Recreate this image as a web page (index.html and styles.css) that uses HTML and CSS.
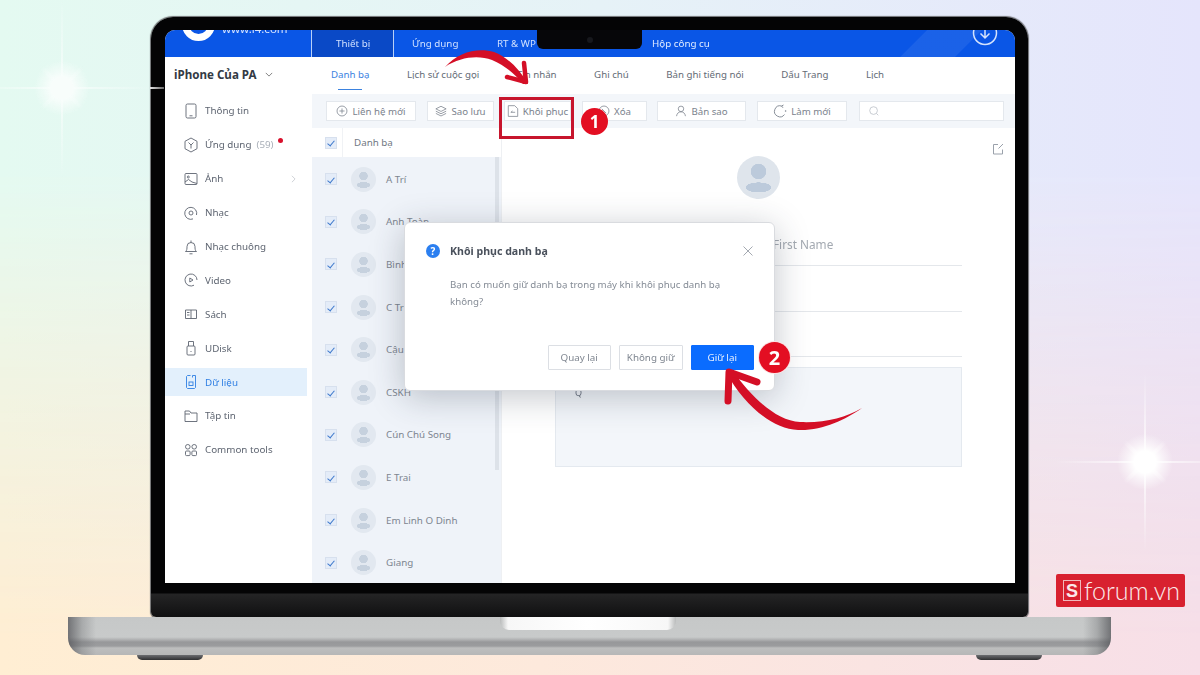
FILE: index.html
```html
<!DOCTYPE html>
<html lang="vi">
<head>
<meta charset="utf-8">
<title>Khôi phục danh bạ</title>
<link rel="stylesheet" href="styles.css">
</head>
<body>
<div class="stage">
  <div class="star star-a"></div>
  <div class="star star-b"></div>

  <div class="laptop">
    <div class="bezel">
      <div class="notch"><span class="camera"></span></div>
      <div class="glint"></div>
      <div class="screen">
        <header class="topbar">
          <div class="brand">
            <span class="brand-mark"></span>
            <span class="brand-url">www.i4.com</span>
          </div>
          <nav class="topnav">
            <span class="topnav-item active">Thiết bị</span>
            <span class="topnav-item apps">Ứng dụng</span>
            <span class="topnav-item wp">RT &amp; WP</span>
            <span class="topnav-item tools">Hộp công cụ</span>
          </nav>
          <div class="shine"></div>
          <svg class="download" viewBox="0 0 26 26"><circle cx="13" cy="13" r="11.5"/><path d="M13 7v11M8.500 13.500 13 18l4.500-4.500"/></svg>
        </header>

        <div class="app">
          <aside class="sidebar">
            <div class="device">iPhone Của PA <svg class="chev" viewBox="0 0 10 6"><path d="M1 1l4 4 4-4"/></svg></div>
            <ul class="menu">
              <li class="menu-item"><svg class="mi" viewBox="0 0 14 16"><rect x="2" y="1" width="10" height="14" rx="1.500"/><path d="M5.500 12.800h3"/></svg>Thông tin</li>
              <li class="menu-item"><svg class="mi" viewBox="0 0 14 16"><path d="M7 1l6 3.300v7.400L7 15l-6-3.300V4.300z"/><path d="M4.500 5.500 7 8l2.500-2.500M7 8v3.500"/></svg>Ứng dụng <span class="count">(59)</span><span class="dot"></span></li>
              <li class="menu-item"><svg class="mi" viewBox="0 0 14 16"><rect x="1" y="2.500" width="12" height="11" rx="1"/><circle cx="4.300" cy="6" r="1"/><path d="M1 11l3.500-2.500L8 11l5 1.500"/></svg>Ảnh<svg class="more" viewBox="0 0 6 10"><path d="M1 1l4 4-4 4"/></svg></li>
              <li class="menu-item"><svg class="mi" viewBox="0 0 14 16"><path d="M9 13.900A6 6 0 1 1 12.500 10"/><circle cx="7" cy="8" r="2"/></svg>Nhạc</li>
              <li class="menu-item"><svg class="mi" viewBox="0 0 14 16"><path d="M1.500 12.500c1.500-1 1.500-3 1.500-5a4 4 0 0 1 8 0c0 2 0 4 1.500 5zM5.500 14.800h3M7 1.500v2"/></svg>Nhạc chuông</li>
              <li class="menu-item"><svg class="mi" viewBox="0 0 14 16"><path d="M10 13.200A6 6 0 1 1 13 8"/><path d="M5.800 6v4L9 8z"/></svg>Video</li>
              <li class="menu-item"><svg class="mi" viewBox="0 0 14 16"><path d="M7 4H1.500v8.500H7zM7 4h5.500v8.500H7M3 6.500h2.500M3 9h2.500"/></svg>Sách</li>
              <li class="menu-item"><svg class="mi" viewBox="0 0 14 16"><rect x="3" y="6" width="8" height="9" rx="1"/><path d="M4.500 6V1.500h5V6"/><path d="M6.500 11.500h1"/></svg>UDisk</li>
              <li class="menu-item current"><svg class="mi" viewBox="0 0 14 16"><path d="M6.500 1.500h-3l-1 1v11l1 1h7l1-1v-12h-3v2"/><rect x="5" y="8" width="4" height="3.500"/></svg>Dữ liệu</li>
              <li class="menu-item"><svg class="mi" viewBox="0 0 14 16"><path d="M1 3h4.500l1.500 2h6v8.500H1zM1 6h5"/></svg>Tập tin</li>
              <li class="menu-item"><svg class="mi" viewBox="0 0 14 16"><circle cx="3.800" cy="4.800" r="2.300"/><circle cx="10.200" cy="4.800" r="2.300"/><rect x="1.500" y="9" width="4.600" height="4.600" rx="1"/><rect x="7.900" y="9" width="4.600" height="4.600" rx="1"/></svg>Common tools</li>
            </ul>
          </aside>

          <main class="main">
            <nav class="tabs">
              <span class="tab active">Danh bạ</span>
              <span class="tab">Lịch sử cuộc gọi</span>
              <span class="tab">Tin nhắn</span>
              <span class="tab">Ghi chú</span>
              <span class="tab">Bản ghi tiếng nói</span>
              <span class="tab">Dấu Trang</span>
              <span class="tab">Lịch</span>
            </nav>

            <div class="toolbar">
              <span class="btn w-new"><svg class="bi" viewBox="0 0 14 14"><circle cx="7" cy="7" r="5.800"/><path d="M7 4v6M4 7h6"/></svg>Liên hệ mới</span>
              <span class="btn w-backup"><svg class="bi" viewBox="0 0 14 14"><path d="M7 1.500 13 4.500 7 7.500 1 4.500zM1 7.200l6 3 6-3M1 9.800l6 3 6-3"/></svg>Sao lưu</span>
              <span class="btn w-restore"><svg class="bi" viewBox="0 0 14 14"><path d="M1.500 .800h7.500l3.500 3.500v9h-11zM4.500 8.500h5M4.500 8.500l2-1.500"/></svg>Khôi phục</span>
              <span class="btn w-del"><svg class="bi" viewBox="0 0 14 14"><circle cx="7" cy="7" r="5.800"/><path d="M4.500 4.500l5 5"/></svg>Xóa</span>
              <span class="btn w-copy"><svg class="bi" viewBox="0 0 14 14"><circle cx="7" cy="4.500" r="3.200"/><path d="M1.800 13c.5-3.500 2.500-5 5.200-5s4.700 1.500 5.200 5"/></svg>Bản sao</span>
              <span class="btn w-refresh"><svg class="bi bi-lg" viewBox="0 0 14 14"><path d="M11.500 10.500A5.500 5.500 0 1 1 8.500 2M8.500 2l2-1M8.500 2l1.500 1.800"/><circle class="bi-dot" cx="12.600" cy="7" r=".8"/></svg>Làm mới</span>
              <span class="search"><svg class="bi" viewBox="0 0 14 14"><circle cx="6.500" cy="6.500" r="4.500"/><path d="M10 10l2 2"/></svg></span>
            </div>

            <div class="content">
              <section class="list">
                <div class="list-head"><span class="check"></span><span class="list-title">Danh bạ</span></div>
                <div class="rows">
                  <div class="row"><span class="check"></span><span class="ava"></span>A Trí</div>
                  <div class="row"><span class="check"></span><span class="ava"></span>Anh Toàn</div>
                  <div class="row"><span class="check"></span><span class="ava"></span>Bình</div>
                  <div class="row"><span class="check"></span><span class="ava"></span>C Trí</div>
                  <div class="row"><span class="check"></span><span class="ava"></span>Cậu</div>
                  <div class="row"><span class="check"></span><span class="ava"></span>CSKH</div>
                  <div class="row"><span class="check"></span><span class="ava"></span>Cún Chú Song</div>
                  <div class="row"><span class="check"></span><span class="ava"></span>E Trai</div>
                  <div class="row"><span class="check"></span><span class="ava"></span>Em Linh O Dinh</div>
                  <div class="row"><span class="check"></span><span class="ava"></span>Giang</div>
                </div>
                <div class="scrollbar"></div>
              </section>

              <section class="detail">
                <svg class="edit" viewBox="0 0 12 12"><path d="M6 1.500H1.500v9.500h9V6.500M6.500 5.500 11 1"/></svg>
                <div class="big-ava"></div>
                <div class="field first">First Name</div>
                <div class="field"></div>
                <div class="field"></div>
                <div class="note">Q</div>
              </section>
            </div>
          </main>
        </div>
      </div>
    </div>
    <div class="base">
      <div class="base-notch"></div>
    </div>
    <div class="feet"><span class="foot"></span><span class="foot"></span></div>
  </div>

  <div class="dialog">
    <div class="dialog-head">
      <span class="q-icon">?</span>
      <span class="dialog-title">Khôi phục danh bạ</span>
      <svg class="close" viewBox="0 0 10 10"><path d="M.5.500l9 9M9.500.500l-9 9"/></svg>
    </div>
    <p class="dialog-body">Bạn có muốn giữ danh bạ trong máy khi khôi phục danh bạ không?</p>
    <div class="dialog-actions">
      <span class="dbtn">Quay lại</span>
      <span class="dbtn">Không giữ</span>
      <span class="dbtn primary">Giữ lại</span>
    </div>
  </div>

  <div class="redbox"></div>
  <div class="badge badge-1">1</div>
  <div class="badge badge-2">2</div>

  <svg class="arrows" viewBox="0 0 1200 675">
    <path class="arrow-fill" d="M445 67C458 52 478 47 494 52C507 57 519 68 528 84L523 84C514 73 504 65 492 60C478 55 460 57 445 67Z"/>
    <path class="arrow-head" d="M524 63 526 82 507 77"/>
    <path class="arrow-fill" d="M862 408C845 420 822 431 798 430C772 429 744 405 726 372L733 371C750 395 775 421 800 422C825 423 845 418 862 408Z"/>
    <path class="arrow-head thick" d="M728 401 729 372 757 382"/>
  </svg>

  <div class="logo"><span class="logo-s">S</span><span class="logo-text">forum.vn</span></div>
</div>
</body>
</html>
```

FILE: styles.css
```css
* { box-sizing: border-box; }
html, body { margin: 0; padding: 0; }
body { width: 1200px; height: 675px; overflow: hidden; font-family: "Noto Sans", "Liberation Sans", sans-serif; }

.stage {
  position: relative;
  width: 1200px;
  height: 675px;
  overflow: hidden;
  padding-top: 17px;
  background: linear-gradient(90deg, #ffeed3 0%, #fde9dc 45%, #f7dfe8 100%);
}
.stage::before {
  content: "";
  position: absolute; inset: 0;
  background: linear-gradient(90deg, #e4faf1 0%, #e6f2f7 50%, #e5e5fc 100%);
  -webkit-mask-image: linear-gradient(180deg, #000 0%, #000 25%, rgba(0,0,0,.55) 55%, rgba(0,0,0,0) 95%);
  mask-image: linear-gradient(180deg, #000 0%, #000 25%, rgba(0,0,0,.55) 55%, rgba(0,0,0,0) 95%);
}

/* sparkles */
.star { position: absolute; width: 180px; height: 180px; }
.star-a { left: -28px; top: -2px; opacity: .75; }
.star-b { left: 1055px; top: 372px; }
.star::before {
  content: "";
  position: absolute; inset: 0;
  background:
    radial-gradient(circle at 50% 50%, #fff 0, #fff 11px, rgba(255,255,255,.55) 18px, rgba(255,255,255,0) 28px),
    linear-gradient(90deg, rgba(255,255,255,0), rgba(255,255,255,.85) 50%, rgba(255,255,255,0)) center / 100% 2px no-repeat,
    linear-gradient(0deg, rgba(255,255,255,0), rgba(255,255,255,.85) 50%, rgba(255,255,255,0)) center / 2px 100% no-repeat;
}
.star::after {
  content: "";
  position: absolute; left: 60px; top: 60px; width: 60px; height: 60px;
  transform: rotate(45deg);
  background:
    linear-gradient(90deg, rgba(255,255,255,0), rgba(255,255,255,.8) 50%, rgba(255,255,255,0)) center / 100% 4px no-repeat,
    linear-gradient(0deg, rgba(255,255,255,0), rgba(255,255,255,.8) 50%, rgba(255,255,255,0)) center / 4px 100% no-repeat;
}

/* laptop */
.laptop { position: relative; width: 877px; margin-left: 151px; }
.bezel {
  position: relative;
  height: 600px;
  padding: 13px 13px 34px 14px;
  border-radius: 22px 22px 5px 5px;
  background: linear-gradient(180deg, #040405 0, #040405 576px, #242425 577px, #101011 600px);
  box-shadow: 0 0 1px 1px #6c6d70;
}
.glint {
  position: absolute; left: -1px; top: 70px;
  width: 14px; height: 2px;
  background: linear-gradient(90deg, #e8e8e8, #666);
}
.notch {
  position: absolute; left: 386px; top: 13px; z-index: 3;
  width: 105px; height: 19px;
  background: #060609;
  border-radius: 0 0 6px 6px;
  display: flex; align-items: center; justify-content: center;
}
.camera { width: 6px; height: 6px; border-radius: 50%; background: #17181d; }
.screen {
  height: 553px;
  background: #fff;
  border-radius: 10px 10px 0 0;
  overflow: hidden;
  display: flex; flex-direction: column;
  filter: blur(.35px);
}

.base {
  position: relative;
  width: 1043px;
  height: 38px;
  margin-left: -83px;
  border-radius: 0 0 17px 17px;
  background:
    linear-gradient(90deg, rgba(85,86,90,.75) 0, rgba(110,112,115,.35) 14px, rgba(150,150,150,0) 28px, rgba(150,150,150,0) 1015px, rgba(110,112,115,.35) 1029px, rgba(85,86,90,.75) 100%),
    linear-gradient(180deg, #c6c8c8 0, #c8caca 20px, #adaeaf 23px, #97989a 25px, #9b9c9e 29px, #bdbebe 31px, #b6b7b7 38px);
  display: flex; justify-content: center;
}
.base-notch {
  width: 176px; height: 13px; margin-right: 3px;
  background: linear-gradient(90deg, #b9bbbb 0, #f7f7f7 8px, #fff 50%, #f7f7f7 168px, #b9bbbb 100%);
  border-radius: 0 0 9px 9px;
}
.feet { display: flex; justify-content: space-between; width: 905px; margin-left: -14px; }
.foot { width: 66px; height: 5px; background: linear-gradient(180deg, #6c6d70, #2f3032); border-radius: 0 0 12px 12px; }

/* top bar */
.topbar {
  position: relative;
  height: 27px; flex: none;
  background: #0a56e6;
  display: flex;
  overflow: hidden;
}
.brand { width: 146px; position: relative; flex: none; }
.brand-mark {
  position: absolute; left: 17px; top: -22px;
  width: 33px; height: 33px; border-radius: 50%;
  border: 7px solid #fff; background: #0a56e6;
}
.brand-url { position: absolute; left: 57px; top: -9px; font-size: 11.500px; color: #d6e4ff; white-space: nowrap; }
.topnav { display: flex; align-items: center; color: #cfe0ff; font-size: 9.800px; height: 100%; z-index: 1; padding-bottom: 0; }
.topnav-item { height: 100%; display: flex; align-items: center; white-space: nowrap; flex: none; padding-bottom: 1px; }
.topnav-item.active { background: #0a49c6; padding-left: 24px; width: 82px; border-left: 1px solid #b9d0f7; }
.topnav-item.apps { padding-left: 18px; width: 104px; border-left: 1px solid #b9d0f7; }
.topnav-item.wp { padding-left: 0; width: 155px; }
.topnav-item.tools { color: #e2ecff; }
.shine {
  position: absolute; right: 0; top: 0; width: 125px; height: 100%;
  background: linear-gradient(135deg, rgba(255,255,255,0) 24%, rgba(255,255,255,.07) 25%, rgba(255,255,255,.07) 60%, rgba(255,255,255,0) 61%);
}
.download { position: absolute; left: 807px; top: -10px; width: 26px; height: 26px; fill: none; stroke: #d5e3fc; stroke-width: 1.500; }

/* app */
.app { flex: 1; display: flex; min-height: 0; }
.sidebar { width: 147px; flex: none; background: #fff; }
.device { height: 36px; padding: 0 0 2px 9px; display: flex; align-items: center; font-size: 11.600px; font-weight: 700; color: #333a44; white-space: pre; }
.chev { width: 8px; height: 5px; margin-left: 5px; fill: none; stroke: #666; stroke-width: 1; }
.menu { list-style: none; margin: 0; padding: 1px 0 0; }
.menu-item {
  position: relative;
  height: 33.900px;
  width: 142px;
  padding-left: 19px;
  display: flex; align-items: center;
  font-size: 9.800px;
  color: #5e6571;
}
.mi { width: 14px; height: 16px; margin-right: 7px; fill: none; stroke: #5d6470; stroke-width: .9; flex: none; }
.menu-item.current { background: linear-gradient(#e3f0fc, #e3f0fc) center / 100% 28px no-repeat; color: #2f7fe3; }
.current .mi { stroke: #2f7fe3; }
.count { color: #a9afb8; margin-left: 5px; }
.dot { width: 5px; height: 5px; border-radius: 50%; background: #d8102c; margin: -9px 0 0 4px; }
.more { position: absolute; right: 11px; top: 13px; width: 5px; height: 8px; fill: none; stroke: #c3c7cd; stroke-width: 1; }

.main { flex: 1; min-width: 0; display: flex; flex-direction: column; }
.tabs { height: 37px; flex: none; padding: 0 0 2px 19px; display: flex; align-items: center; gap: 37.500px; font-size: 9.700px; color: #646b76; }
.tab { position: relative; white-space: nowrap; }
.tab.active { color: #3b82df; }
.tab.active::after { content: ""; position: absolute; left: 7px; right: 7px; bottom: -9px; height: 1.500px; background: #3b82df; }

.toolbar { height: 34px; flex: none; background: #f3f6fa; padding-left: 14px; display: flex; align-items: center; }
.btn {
  height: 20px;
  background: #fff;
  border: 1px solid #e4e8ed;
  display: flex; align-items: center; justify-content: center;
  font-size: 9.700px; color: #7b828d; white-space: nowrap;
  flex: none;
}
.bi { width: 12px; height: 12px; margin-right: 4px; fill: none; stroke: #7b828d; stroke-width: .9; flex: none; }
.bi-lg { width: 14px; height: 14px; }
.bi-dot { fill: #7b828d; stroke: none; }
.w-new { width: 90px; margin-right: 11px; }
.w-backup { width: 67px; margin-right: 10px; }
.w-restore { width: 67px; margin-right: 11px; }
.w-del { width: 65px; margin-right: 10px; }
.w-copy { width: 89px; margin-right: 11px; }
.w-refresh { width: 90px; margin-right: 12px; }
.search { width: 145px; height: 20px; background: #fff; border: 1px solid #e4e8ed; display: flex; align-items: center; padding-left: 8px; flex: none; }
.search .bi { stroke: #b9bec6; }

.content { flex: 1; display: flex; min-height: 0; }
.list { position: relative; width: 189px; flex: none; background: #eff3f9; }
.list-head { height: 29px; background: #fff; display: flex; align-items: center; padding-left: 13px; font-size: 9.800px; color: #717883; }
.list-title { margin-left: 5px; padding-left: 11px; border-left: 1px solid #f0f2f5; line-height: 29px; }
.check {
  width: 12px; height: 12px; flex: none;
  background: #e4ecf8;
  border: 1px solid #d7e0ee;
  position: relative;
}
.check::after {
  content: "";
  position: absolute; left: 3px; top: 1.500px;
  width: 3px; height: 6px;
  border: solid #3d78cc; border-width: 0 1.300px 1.300px 0;
  transform: rotate(40deg);
}
.rows { display: flex; flex-direction: column; padding-top: 1px; }
.row { height: 42.600px; display: flex; align-items: center; padding-left: 13px; font-size: 9.800px; color: #7d8590; flex: none; }
.ava {
  width: 25px; height: 25px; border-radius: 50%; margin: 0 10px 0 14px; flex: none;
  background:
    radial-gradient(circle at 50% 36%, #c6d1de 0, #c6d1de 4px, rgba(198,209,222,0) 4.500px),
    radial-gradient(ellipse 7px 3px at 50% 72%, #c6d1de 0, #c6d1de 98%, rgba(198,209,222,0) 100%),
    #e2e8f0;
}
.scrollbar { position: absolute; right: 2px; top: 29px; width: 4px; height: 313px; background: #dde2e9; }

.detail { position: relative; flex: 1; border-left: 1px solid #eef0f3; padding: 28px 53px 0 53px; display: flex; flex-direction: column; }
.edit { position: absolute; right: 11px; top: 15px; width: 12px; height: 12px; fill: none; stroke: #9aa1ab; stroke-width: 1; }
.big-ava {
  width: 43px; height: 43px; border-radius: 50%; align-self: center; flex: none;
  background:
    radial-gradient(circle at 50% 36%, #bccadb 0, #bccadb 7.500px, rgba(188,202,219,0) 8px),
    radial-gradient(ellipse 13px 5px at 50% 73%, #bccadb 0, #bccadb 98%, rgba(188,202,219,0) 100%),
    #dfe5ec;
}
.field { height: 45.500px; flex: none; border-bottom: 1px solid #e4e7eb; font-size: 11.800px; color: #a3a9b1; padding: 14px 0 0 218px; }
.field.first { height: 67px; padding-top: 37px; }
.note { height: 100px; flex: none; margin-top: 10px; background: #f3f6fa; border: 1px solid #e4e9ef; padding: 18px 0 0 19px; font-size: 9px; color: #6d7480; }

/* dialog */
.dialog {
  position: absolute; left: 404px; top: 222px; z-index: 5;
  width: 371px; height: 169px;
  background: #fff;
  border-radius: 6px;
  border: 1px solid #d9dbdf;
  box-shadow: 0 6px 34px rgba(40,50,70,.28);
  padding: 19px 20px 20px 21px;
  display: flex; flex-direction: column;
}
.dialog-head { display: flex; align-items: center; height: 18px; }
.q-icon { width: 14px; height: 14px; border-radius: 50%; background: #2b7ff0; color: #fff; font-size: 10px; font-weight: 700; display: flex; align-items: center; justify-content: center; flex: none; }
.dialog-title { font-size: 10.600px; font-weight: 700; color: #4a515c; margin-left: 10px; flex: 1; }
.close { width: 10px; height: 10px; fill: none; stroke: #a4a9b1; stroke-width: 1; margin-right: 1px; }
.dialog-body { margin: 16px 0 0 24px; width: 280px; font-size: 9.700px; line-height: 17px; color: #858c96; }
.dialog-actions { margin-top: auto; display: flex; justify-content: flex-end; gap: 8px; }
.dbtn { width: 63.500px; height: 25px; border: 1px solid #dcdfe4; background: #fff; color: #7f8690; font-size: 9.800px; display: flex; align-items: center; justify-content: center; border-radius: 1px; }
.dbtn.primary { background: #0a6cff; border-color: #0a6cff; color: #e8f1ff; }

/* annotations */
.redbox { position: absolute; left: 499px; top: 97px; width: 75px; height: 42px; border: 3px solid #c7152d; z-index: 6; }
.badge {
  position: absolute; z-index: 6;
  border-radius: 50%;
  background: #e30e22; color: #fff;
  font-weight: 700;
  display: flex; align-items: center; justify-content: center;
}
.badge-1 { left: 581px; top: 108px; width: 27px; height: 27px; font-size: 17px; }
.badge-2 { left: 759px; top: 342px; width: 31px; height: 31px; font-size: 20px; box-shadow: 0 0 0 1px #fbe3e4; }
.arrows { position: absolute; left: 0; top: 0; width: 1200px; height: 675px; z-index: 7; pointer-events: none; }
.arrow-fill { fill: #d40f26; }
.arrow-head { fill: none; stroke: #d40f26; stroke-width: 4.500; stroke-linecap: round; stroke-linejoin: round; }
.arrow-head.thick { stroke-width: 7; }

.logo {
  position: absolute; left: 1056px; top: 574px; z-index: 6;
  width: 129px; height: 33px;
  background: #d8212f; border-radius: 2px;
  display: flex; align-items: center; padding-left: 7px;
  color: #fbe9ea;
}
.logo-s { width: 18px; height: 21px; border: 1px solid #f0b9bc; display: flex; align-items: center; justify-content: center; font: 700 18px/1 "Liberation Sans", sans-serif; flex: none; }
.logo-text { font: 300 25px/1 "Lato", sans-serif; margin-left: 3px; white-space: nowrap; }
```
